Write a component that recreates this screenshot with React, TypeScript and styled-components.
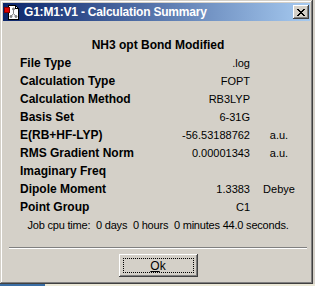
import React from "react";
import styled, { createGlobalStyle } from "styled-components";

const Global = createGlobalStyle`
  html, body {
    margin: 0;
    padding: 0;
    background: #d4d0c8;
  }
  body {
    font-family: "Liberation Sans", Arial, sans-serif;
  }
`;

const Screen = styled.div`
  width: 315px;
  height: 286px;
  display: flex;
  flex-direction: column;
  overflow: hidden;
`;

const Window = styled.div`
  width: 313px;
  height: 284px;
  box-sizing: border-box;
  padding: 3px;
  background: #d4d0c8;
  display: flex;
  flex-direction: column;
  box-shadow: inset -1px -1px #404040, inset 1px 1px #d4d0c8,
    inset -2px -2px #808080, inset 2px 2px #ffffff;
`;

const TitleBar = styled.div`
  height: 18px;
  display: flex;
  align-items: center;
  padding: 0 1px 0 1px;
  background: linear-gradient(to right, #0a246a, #a6caf0);
`;

const Title = styled.span`
  margin-left: 4px;
  color: #ffffff;
  font-weight: bold;
  font-size: 12px;
  letter-spacing: -0.2px;
  white-space: nowrap;
`;

const CaptionButton = styled.div`
  margin-left: auto;
  width: 16px;
  height: 14px;
  box-sizing: border-box;
  background: #d4d0c8;
  display: flex;
  align-items: center;
  justify-content: center;
  box-shadow: inset -1px -1px #404040, inset 1px 1px #ffffff,
    inset -2px -2px #808080, inset 2px 2px #d4d0c8;
`;

const Body = styled.div`
  flex: 1;
  display: flex;
  flex-direction: column;
  padding: 15px 3px 0 6px;
`;

const Heading = styled.div`
  height: 18px;
  line-height: 18px;
  text-align: center;
  font-weight: bold;
  font-size: 12px;
`;

const Grid = styled.div`
  margin-left: 11px;
  display: grid;
  grid-template-columns: 130px 100px 50px;
  grid-auto-rows: 18px;
  align-items: center;
`;

const Label = styled.div`
  font-weight: bold;
  font-size: 12px;
  white-space: nowrap;
`;

const Value = styled.div`
  font-size: 11px;
  text-align: right;
  white-space: nowrap;
`;

const Unit = styled.div`
  font-size: 11px;
  padding-left: 8px;
  text-align: center;
  white-space: nowrap;
`;

const JobLine = styled.div`
  height: 18px;
  line-height: 18px;
  font-size: 11px;
  letter-spacing: -0.2px;
  text-align: center;
  white-space: pre;
`;

const Separator = styled.div`
  margin-top: 13px;
  border-top: 1px solid #808080;
  border-bottom: 1px solid #ffffff;
`;

const ButtonRow = styled.div`
  display: flex;
  justify-content: center;
  margin-top: 5px;
`;

const PushButton = styled.button`
  width: 79px;
  height: 23px;
  box-sizing: border-box;
  padding: 4px;
  border: none;
  background: #d4d0c8;
  display: flex;
  font-family: "Liberation Sans", Arial, sans-serif;
  font-size: 12px;
  color: #000;
  box-shadow: inset -1px -1px #404040, inset 1px 1px #ffffff,
    inset -2px -2px #808080, inset 2px 2px #d4d0c8;
`;

const FocusRing = styled.span`
  flex: 1;
  border: 1px dotted #000;
  display: flex;
  align-items: center;
  justify-content: center;
`;

const BottomStrip = styled.div`
  height: 2px;
  display: flex;
  background: #ece9d8;
`;

const StripBlue = styled.div`
  width: 45px;
  background: #3a6ea5;
`;

const AppIcon = () => (
  <svg width="16" height="16" viewBox="0 0 16 16" shapeRendering="crispEdges">
    <path d="M4.5 1.5H11.5L14.5 4.5V15.5H4.5Z" fill="#fff" stroke="#000" />
    <path d="M11.5 1.5V4.5H14.5" fill="none" stroke="#000" />
    <g stroke="#808080" fill="#808080" shapeRendering="auto">
      <line x1="9.5" y1="5" x2="9.5" y2="9.5" strokeWidth="1" />
      <line x1="9.5" y1="9.5" x2="7" y2="12.5" strokeWidth="1" />
      <line x1="9.5" y1="9.5" x2="12" y2="12.5" strokeWidth="1" />
      <circle cx="9.5" cy="5" r="1" />
      <circle cx="7" cy="12.5" r="1" />
      <circle cx="12" cy="12.5" r="1" />
    </g>
    <rect x="0.5" y="3.5" width="5" height="5" fill="#e00000" stroke="#800000" />
  </svg>
);

const CloseGlyph = () => (
  <svg width="8" height="7" viewBox="0 0 8 7" shapeRendering="crispEdges">
    <path
      d="M0 0h2v1h-2zM6 0h2v1h-2zM1 1h2v1h-2zM5 1h2v1h-2zM2 2h4v1h-4zM3 3h2v1h-2zM2 4h4v1h-4zM1 5h2v1h-2zM5 5h2v1h-2zM0 6h2v1h-2zM6 6h2v1h-2z"
      fill="#000"
    />
  </svg>
);

type Row = { label: string; value?: string; unit?: string };

const rows: Row[] = [
  { label: "File Type", value: ".log" },
  { label: "Calculation Type", value: "FOPT" },
  { label: "Calculation Method", value: "RB3LYP" },
  { label: "Basis Set", value: "6-31G" },
  { label: "E(RB+HF-LYP)", value: "-56.53188762", unit: "a.u." },
  { label: "RMS Gradient Norm", value: "0.00001343", unit: "a.u." },
  { label: "Imaginary Freq" },
  { label: "Dipole Moment", value: "1.3383", unit: "Debye" },
  { label: "Point Group", value: "C1" },
];

export default function App() {
  return (
    <Screen>
      <Global />
      <Window>
        <TitleBar>
          <AppIcon />
          <Title>G1:M1:V1 - Calculation Summary</Title>
          <CaptionButton>
            <CloseGlyph />
          </CaptionButton>
        </TitleBar>
        <Body>
          <Heading>NH3 opt Bond Modified</Heading>
          <Grid>
            {rows.map((r) => (
              <React.Fragment key={r.label}>
                <Label>{r.label}</Label>
                <Value>{r.value ?? ""}</Value>
                <Unit>{r.unit ?? ""}</Unit>
              </React.Fragment>
            ))}
          </Grid>
          <JobLine>Job cpu time:  0 days  0 hours  0 minutes 44.0 seconds.</JobLine>
          <Separator />
          <ButtonRow>
            <PushButton>
              <FocusRing>
                <u>O</u>k
              </FocusRing>
            </PushButton>
          </ButtonRow>
        </Body>
      </Window>
      <BottomStrip>
        <StripBlue />
      </BottomStrip>
    </Screen>
  );
}
